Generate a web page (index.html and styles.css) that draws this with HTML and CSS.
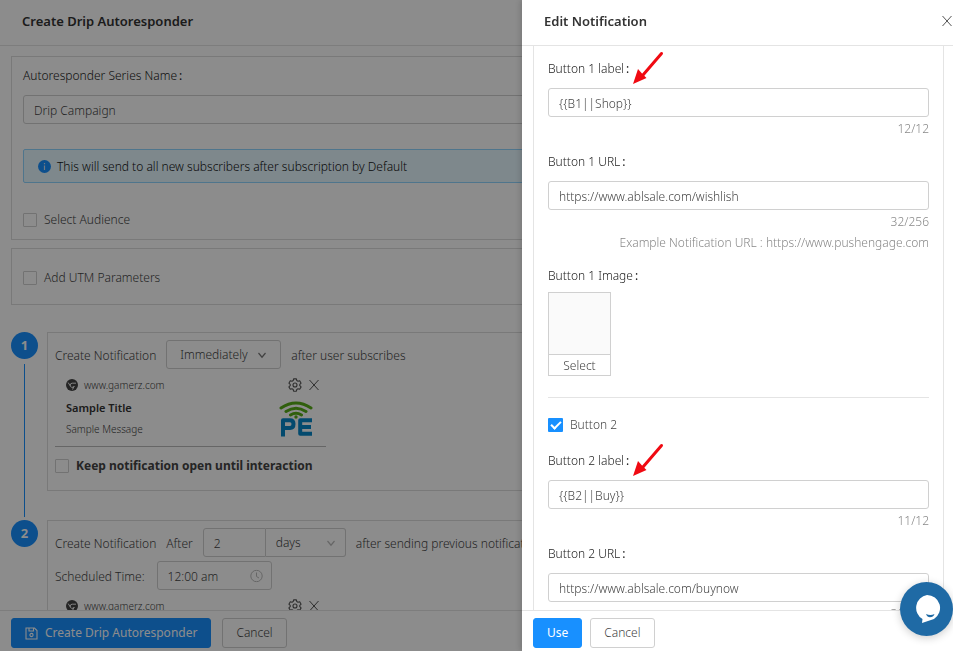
FILE: index.html
```html
<!DOCTYPE html>
<html lang="en">
<head>
<meta charset="utf-8">
<title>Create Drip Autoresponder</title>
<meta name="viewport" content="width=device-width, initial-scale=1">
<link rel="stylesheet" href="styles.css">
</head>
<body>
<svg width="0" height="0" class="sprite" aria-hidden="true">
  <symbol id="close" viewBox="0 0 12 12"><path d="M1.5 1 10.500 11M10.500 1 1.500 11" fill="none" stroke="currentColor" stroke-width="1"/></symbol>
  <symbol id="gear" viewBox="0 0 14 14"><g fill="none" stroke="currentColor" stroke-width="1.100" stroke-linejoin="round"><path d="M5.600.9h2.800l.4 1.700 1.200.7 1.700-.5 1.400 2.400-1.300 1.200v1.300l1.300 1.200-1.400 2.400-1.700-.5-1.200.7-.4 1.700H5.600l-.4-1.700-1.200-.7-1.700.5L.9 8.900l1.300-1.200V6.400L.9 5.200l1.400-2.400 1.700.5 1.200-.7z"/><circle cx="7" cy="7" r="2"/></g></symbol>
  <symbol id="chrome" viewBox="0 0 12 12"><circle cx="6" cy="6" r="6" fill="currentColor"/><path d="M10 4.200H6.200a2.100 2.100 0 1 0 2 2.900L6.500 10.500M2.200 3.600l2 3.200" fill="none" stroke="#eee" stroke-width="1"/></symbol>
  <symbol id="down" viewBox="0 0 10 10"><path d="m1.500 3 3.500 4.200L8.500 3" fill="none" stroke="currentColor" stroke-width="1.200"/></symbol>
  <symbol id="arrow" viewBox="0 0 32 34"><path d="M28.500 2.500 10 24" stroke="#f00a12" stroke-width="3" stroke-linecap="round"/><path d="m0 33 5-15 4 4.500L13.500 27z" fill="#f00a12"/></symbol>
</svg>

<div class="app">
  <header class="bar"><h1>Create Drip Autoresponder</h1></header>
  <main class="content">
    <section class="card series">
      <label class="label" for="series">Autoresponder Series Name<span class="colon">:</span></label>
      <input class="input" id="series" type="text" value="Drip Campaign">
      <div class="alert">
        <svg width="13" height="13" viewBox="0 0 13 13" aria-hidden="true"><circle cx="6.500" cy="6.500" r="6.500" fill="#1890ff"/><path d="M6.500 5.500v4.500M6.500 3v1.300" stroke="#cde" stroke-width="1.200"/></svg>
        <span>This will send to all new subscribers after subscription by Default</span>
      </div>
      <label class="check"><input type="checkbox">Select Audience</label>
    </section>
    <section class="card utm">
      <label class="check"><input type="checkbox">Add UTM Parameters</label>
    </section>

    <div class="steps">
      <div class="step">
        <div class="rail"><span class="num">1</span><span class="line"></span></div>
        <section class="step-card">
          <div class="row">
            <span>Create Notification</span>
            <span class="select-wrap immediately"><select class="input" aria-label="When"><option>Immediately</option></select><svg width="10" height="10"><use href="#down"/></svg></span>
            <span>after user subscribes</span>
          </div>
          <article class="preview">
            <div class="site"><svg width="12" height="12"><use href="#chrome"/></svg><span>www.gamerz.com</span>
              <button class="icon" aria-label="Settings"><svg width="14" height="14"><use href="#gear"/></svg></button>
              <button class="icon" aria-label="Remove"><svg width="12" height="12"><use href="#close"/></svg></button>
            </div>
            <div class="message">
              <div><h2>Sample Title</h2><p>Sample Message</p></div>
              <svg class="logo" width="34" height="36" viewBox="0 0 34 36" role="img" aria-label="PE">
                <g fill="none" stroke="#58ad18" stroke-width="3" stroke-linecap="round"><path d="M2 7q15-10 30 0M7 10.500q10-6.500 20 0M11.500 14q5.500-3.500 11 0"/></g>
                <circle cx="17" cy="16" r="1.700" fill="#58ad18"/>
                <g fill="none" stroke="#0787c8" stroke-width="4" stroke-linejoin="round"><path d="M4 35.500V19.200h7q3.500 0 3.500 3.900T11 27H4M33 19.200H21.200v13.600H33M21.200 26H32"/></g>
              </svg>
            </div>
          </article>
          <label class="check keep"><input type="checkbox">Keep notification open until interaction</label>
        </section>
      </div>
      <div class="step">
        <div class="rail"><span class="num">2</span></div>
        <section class="step-card">
          <div class="row">
            <span>Create Notification</span><span>After</span>
            <span class="group"><input class="input amount" type="text" value="2" aria-label="Delay"><span class="select-wrap days"><select class="input" aria-label="Unit"><option>days</option></select><svg width="10" height="10"><use href="#down"/></svg></span></span>
            <span>after sending previous notification</span>
          </div>
          <div class="row time-row">
            <label for="time">Scheduled Time:</label>
            <span class="select-wrap time"><input class="input" id="time" type="text" value="12:00 am"><svg width="13" height="13" viewBox="0 0 13 13"><path d="M6.500 3v4l2.500 1.500" fill="none" stroke="currentColor"/><circle cx="6.500" cy="6.500" r="5.700" fill="none" stroke="currentColor"/></svg></span>
          </div>
          <article class="preview">
            <div class="site"><svg width="12" height="12"><use href="#chrome"/></svg><span>www.gamerz.com</span>
              <button class="icon" aria-label="Settings"><svg width="14" height="14"><use href="#gear"/></svg></button>
              <button class="icon" aria-label="Remove"><svg width="12" height="12"><use href="#close"/></svg></button>
            </div>
          </article>
        </section>
      </div>
    </div>
  </main>
  <footer class="actions">
    <button class="btn primary create"><svg width="13" height="13" viewBox="0 0 13 13" aria-hidden="true"><g fill="none" stroke="currentColor" stroke-width="1.100"><path d="M1 1h8.500L12 3.500V12H1zM4 1v3h4.500V1"/><circle cx="6.500" cy="8" r="1.600"/></g></svg>Create Drip Autoresponder</button>
    <button class="btn">Cancel</button>
  </footer>
</div>

<div class="mask"></div>

<aside class="drawer" aria-label="Edit Notification">
  <header class="bar"><h1>Edit Notification</h1><button class="icon" aria-label="Close"><svg width="12" height="12"><use href="#close"/></svg></button></header>
  <div class="drawer-body">
    <form class="panel">
      <div class="field">
        <label class="label" for="b1l">Button 1 label<span class="colon">:</span></label>
        <input class="input" id="b1l" type="text" value="{{B1||Shop}}">
        <p class="hint">12/12</p>
        <svg class="arrow" width="32" height="34" aria-hidden="true"><use href="#arrow"/></svg>
      </div>
      <div class="field">
        <label class="label" for="b1u">Button 1 URL<span class="colon">:</span></label>
        <input class="input" id="b1u" type="text" value="https://www.ablsale.com/wishlish">
        <p class="hint">32/256</p>
        <p class="hint">Example Notification URL : https://www.pushengage.com</p>
      </div>
      <div class="image-field">
        <label class="label" for="pick">Button 1 Image<span class="colon">:</span></label>
        <div class="thumb"></div>
        <button class="pick" id="pick" type="button">Select</button>
      </div>
      <hr>
      <label class="check toggle"><input type="checkbox" checked>Button 2</label>
      <div class="field">
        <label class="label" for="b2l">Button 2 label<span class="colon">:</span></label>
        <input class="input" id="b2l" type="text" value="{{B2||Buy}}">
        <p class="hint">11/12</p>
        <svg class="arrow" width="32" height="34" aria-hidden="true"><use href="#arrow"/></svg>
      </div>
      <div class="field">
        <label class="label" for="b2u">Button 2 URL<span class="colon">:</span></label>
        <input class="input" id="b2u" type="text" value="https://www.ablsale.com/buynow">
        <p class="hint">30/256</p>
      </div>
    </form>
  </div>
  <footer class="actions"><button class="btn primary">Use</button><button class="btn">Cancel</button></footer>
</aside>

<button class="chat" aria-label="Open chat"><svg width="28" height="30" viewBox="0 0 28 30"><path d="M14 1a13 13 0 0 1 7 24q-6 2-12 4l.5-4A13 13 0 0 1 14 1z" fill="#fff"/><path d="M13 20q4.500 2 8.500 0-1.200 3.200-4.500 3.200-2.700 0-4-3.200z" fill="#1f6aa5"/></svg></button>
</body>
</html>
```
FILE: styles.css
```css
* { box-sizing: border-box; }
body { margin: 0; height: 100vh; overflow: hidden; font: 300 12px/20px "Noto Sans", "Open Sans", sans-serif; color: #444; background: #fff; }
h1, h2, p { margin: 0; }
button, input, select { font: inherit; color: inherit; }
.sprite { position: absolute; }

.app, .drawer { display: flex; flex-direction: column; height: 100vh; }
.bar { flex: none; display: flex; align-items: center; justify-content: space-between; height: 46px; padding: 0 0 3px 22px; border-bottom: 1px solid #e4e4e4; }
.bar h1 { font-size: 13px; font-weight: 600; color: #333; }
.icon { display: flex; padding: 0; border: 0; background: none; color: #555; cursor: pointer; }
.actions { flex: none; display: flex; gap: 11px; height: 41px; padding: 7px 11px 4px; border-top: 1px solid #e4e4e4; background: #fff; }
.btn { display: flex; align-items: center; justify-content: center; gap: 7px; height: 30px; padding: 0 13px; border: 1px solid #d0d0d0; border-radius: 3px; background: #fff; }
.btn.primary { border-color: #1890ff; background: #1890ff; color: #fff; font-weight: 400; }

.content { flex: 1; min-height: 0; overflow: hidden; padding: 10px 11px 0; }
.card { border: 1px solid #dcdcdc; padding: 0 11px; }
.series { padding-top: 8px; padding-bottom: 9px; }
.utm { margin-top: 8px; padding-top: 19px; padding-bottom: 16px; }
.label { display: block; line-height: 22px; color: #222; }
.colon { margin-left: 2px; font-weight: 400; }
.input { display: block; width: 100%; height: 29px; padding: 1px 10px 0; border: 1px solid #d0d0d0; border-radius: 3px; background: #fff; outline: 0; }
.series .input { margin-top: 8px; background: transparent; }
.alert { display: flex; align-items: center; gap: 6px; height: 34px; margin: 25px 0 27px; padding: 1px 14px 0; border: 1px solid #91d5ff; border-radius: 2px; background: #e6f7ff; color: #111; }
.check { display: flex; align-items: center; gap: 7px; }
.check input { appearance: none; width: 14px; height: 14px; margin: 0; border: 1px solid #d0d0d0; border-radius: 1px; background: #fff; }

.steps { margin-top: 27px; }
.step { display: flex; gap: 9px; }
.rail { flex: none; display: flex; flex-direction: column; align-items: center; width: 27px; }
.num { flex: none; width: 27px; height: 27px; border-radius: 50%; background: #1890ff; color: #fff; font-weight: 700; font-size: 13px; line-height: 27px; text-align: center; }
.line { flex: 1; width: 1px; margin: 5px 0 3px; background: #1890ff; }
.step-card { flex: 1; min-width: 0; height: 159px; margin-bottom: 29px; padding: 7px; border: 1px solid #dcdcdc; }
.row { display: flex; align-items: center; gap: 10px; white-space: nowrap; }
.row > span:not([class]), .row > label { padding-top: 2px; }
.time-row { margin-top: 4px; gap: 12px; }
.select-wrap { position: relative; display: block; color: #777; }
.select-wrap svg { position: absolute; right: 14px; top: 50%; transform: translateY(-50%); pointer-events: none; }
.select-wrap select { appearance: none; padding: 0 13px; color: #444; }
.immediately, .time { width: 115px; }
.group { display: flex; }
.amount { width: 63px; border-radius: 3px 0 0 3px; }
.days { width: 80px; color: #bbb; }
.days svg { right: 10px; }
.days .input { padding: 1px 10px 0; border-left: 0; border-radius: 0 3px 3px 0; }
.time { color: #bbb; }
.time svg { right: 9px; }
.time input { color: #444; }
.preview { width: 271px; height: 72px; margin-top: 6px; padding: 0 6px 0 11px; border-bottom: 1px solid #bbb; }
.site { display: flex; align-items: center; gap: 6px; height: 20px; font-size: 10px; color: #444; }
.site span { flex: 1; }
.message { display: flex; justify-content: space-between; padding: 2px 7px 0 0; }
.message h2 { font-size: 11px; line-height: 21px; font-weight: 600; color: #333; }
.message p { font-size: 10px; line-height: 22px; }
.logo { margin-top: 4px; }
.keep { margin-top: 9px; font-weight: 700; }

.mask { position: fixed; inset: 0; background: rgba(0, 0, 0, 0.45); }
.drawer { position: fixed; top: 0; right: 0; width: 431px; max-width: 100%; background: #fff; box-shadow: -2px 0 6px rgba(0, 0, 0, 0.15); }
.drawer .actions { gap: 8px; }
.drawer-body { flex: 1; min-height: 0; overflow: hidden; padding: 0 9px 0 11px; }
.panel { min-height: 100%; padding: 12px 14px; border: solid #e4e4e4; border-width: 0 1px; }
.field { position: relative; margin-bottom: 12px; }
.field .input { margin: 8px 0 2px; }
.hint { text-align: right; color: #888; }
.hint + .hint { margin-top: 1px; }
.arrow { position: absolute; left: 85px; top: -7px; }
.image-field { width: 63px; white-space: nowrap; }
.thumb { height: 63px; margin-top: 5px; border: 1px solid #d0d0d0; background: #fafafa; }
.pick { display: block; width: 100%; height: 21px; padding: 2px 0 0; border: 1px solid #d0d0d0; border-top: 0; background: #fff; line-height: 18px; }
.panel hr { height: 1px; margin: 21px 0 17px; border: 0; background: #e4e4e4; }
.toggle { margin-bottom: 15px; }
.toggle input { width: 15px; border: 0; background: #1890ff; display: grid; place-items: center; }
.toggle input::after { content: ""; width: 8px; height: 4px; border: solid #fff; border-width: 0 0 2px 2px; transform: translateY(-1px) rotate(-45deg); }

.chat { position: fixed; right: 0; bottom: 15px; display: grid; place-items: center; width: 53px; height: 54px; padding: 0; border: 0; border-radius: 50%; background: #1f6aa5; box-shadow: 0 2px 8px rgba(0, 0, 0, 0.2); }
```
